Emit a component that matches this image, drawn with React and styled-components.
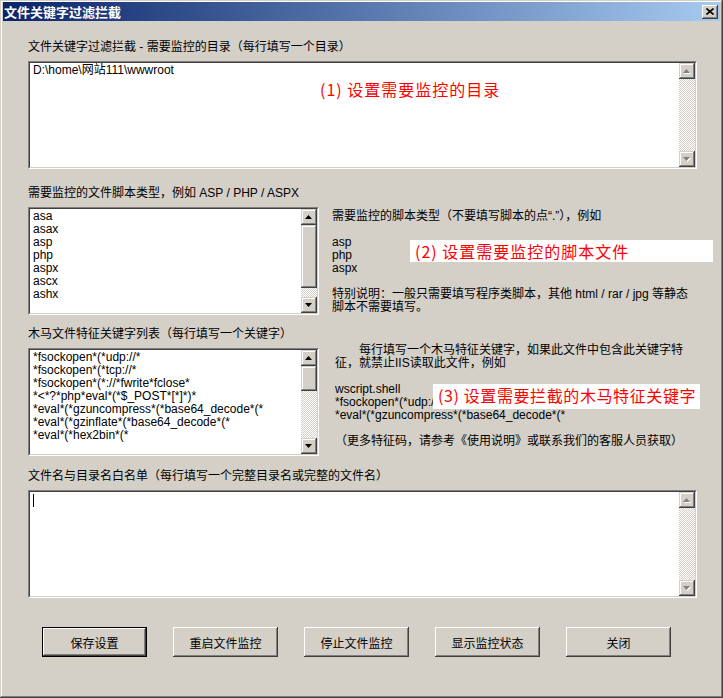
import React from 'react'
import styled, { createGlobalStyle } from 'styled-components'

const GlobalStyle = createGlobalStyle`
  html, body {
    margin: 0;
    padding: 0;
    background: #d4d0c8;
  }
  body {
    font-family: "Liberation Sans", "Noto Sans CJK SC", sans-serif;
    font-size: 12px;
    color: #000;
  }
`

const scriptTypes = ['asa', 'asax', 'asp', 'php', 'aspx', 'ascx', 'ashx']

const trojanKeys = [
  '*fsockopen*(*udp://*',
  '*fsockopen*(*tcp://*',
  '*fsockopen*(*://*fwrite*fclose*',
  '*<*?*php*eval*(*$_POST*[*]*)*',
  '*eval*(*gzuncompress*(*base64_decode*(*',
  '*eval*(*gzinflate*(*base64_decode*(*',
  '*eval*(*hex2bin*(*',
]

const scriptHelp = [
  '需要监控的脚本类型（不要填写脚本的点“.”），例如',
  '',
  'asp',
  'php',
  'aspx',
  '',
  '特别说明：一般只需要填写程序类脚本，其他 html / rar / jpg 等静态',
  '脚本不需要填写。',
]

const trojanHelp = [
  '\u3000\u3000每行填写一个木马特征关键字，如果此文件中包含此关键字特',
  '征，就禁止IIS读取此文件，例如',
  '',
  'wscript.shell',
  '*fsockopen*(*udp://*',
  '*eval*(*gzuncompress*(*base64_decode*(*',
  '',
  '（更多特征码，请参考《使用说明》或联系我们的客服人员获取）',
]

const buttons = ['保存设置', '重启文件监控', '停止文件监控', '显示监控状态', '关闭']

const Arrow = ({ dir, disabled }) => (
  <svg width="8" height="5" viewBox="0 0 8 5">
    {disabled && (
      <polygon
        points={dir === 'up' ? '4.5,1 8,5 1,5' : '1,1 8,1 4.5,5'}
        fill="#fff"
      />
    )}
    <polygon
      points={dir === 'up' ? '3.5,0 7,4 0,4' : '0,0 7,0 3.5,4'}
      fill={disabled ? '#808080' : '#000'}
    />
  </svg>
)

const ScrollBar = ({ disabled, thumbTop, thumbHeight }) => (
  <Bar>
    <ArrowButton>
      <Arrow dir="up" disabled={disabled} />
    </ArrowButton>
    <Track>
      {!disabled && <Thumb style={{ top: thumbTop, height: thumbHeight }} />}
    </Track>
    <ArrowButton>
      <Arrow dir="down" disabled={disabled} />
    </ArrowButton>
  </Bar>
)

const App = () => {
  return (
    <>
      <GlobalStyle />
      <Window>
        <TitleBar>
          <Title>文件关键字过滤拦截</Title>
          <CloseButton>
            <svg width="8" height="7" viewBox="0 0 8 7">
              <path d="M0.5 0.5 L7.5 6.5 M7.5 0.5 L0.5 6.5" stroke="#000" strokeWidth="1.6" />
            </svg>
          </CloseButton>
        </TitleBar>

        <Body>
          <Section>
            <Label>文件关键字过滤拦截 - 需要监控的目录（每行填写一个目录）</Label>
            <Sunken>
              <Well>
                <Content>
                  <Line>D:\home\网站111\wwwroot</Line>
                </Content>
                <ScrollBar disabled />
              </Well>
            </Sunken>
          </Section>

          <Section gap={17}>
            <Label>需要监控的文件脚本类型，例如 ASP / PHP / ASPX</Label>
            <Row>
              <ListBox>
                <Well>
                  <Content>
                    {scriptTypes.map((t) => (
                      <Line key={t}>{t}</Line>
                    ))}
                  </Content>
                  <ScrollBar thumbTop={0} thumbHeight={63} />
                </Well>
              </ListBox>
              <Notes offset={3} indent={0}>
                {scriptHelp.map((l, i) => (
                  <Line key={i}>{l}</Line>
                ))}
              </Notes>
            </Row>
          </Section>

          <Section gap={12}>
            <Label>木马文件特征关键字列表（每行填写一个关键字）</Label>
            <Row>
              <ListBox>
                <Well>
                  <Content>
                    {trojanKeys.map((t) => (
                      <Line key={t}>{t}</Line>
                    ))}
                  </Content>
                  <ScrollBar thumbTop={0} thumbHeight={25} />
                </Well>
              </ListBox>
              <Notes offset={-4} indent={3}>
                {trojanHelp.map((l, i) => (
                  <Line key={i}>{l}</Line>
                ))}
              </Notes>
            </Row>
          </Section>

          <Section gap={13}>
            <Label>文件名与目录名白名单（每行填写一个完整目录名或完整的文件名）</Label>
            <Sunken>
              <Well>
                <Content>
                  <Caret />
                </Content>
                <ScrollBar disabled />
              </Well>
            </Sunken>
          </Section>

          <ButtonRow>
            {buttons.map((b, i) => (
              <Button key={b} $default={i === 0}>
                {b}
              </Button>
            ))}
          </ButtonRow>

          <Callout style={{ left: 312, top: 58 }} $spacing={1}>
            (1) 设置需要监控的目录
          </Callout>
          <Callout style={{ left: 407, top: 219, width: 303, height: 22 }} $boxed $spacing={1}>
            (2) 设置需要监控的脚本文件
          </Callout>
          <Callout style={{ left: 430, top: 363, width: 267, height: 25 }} $boxed $spacing={0.6}>
            (3) 设置需要拦截的木马特征关键字
          </Callout>
        </Body>
      </Window>
    </>
  )
}

export default App

const Window = styled.div`
  width: 723px;
  height: 698px;
  box-sizing: border-box;
  padding: 2px 3px 3px 3px;
  background: #d4d0c8;
  box-shadow: inset -1px -1px #404040, inset 1px 1px #d4d0c8,
    inset -2px -2px #808080, inset 2px 2px #fff;
  display: flex;
  flex-direction: column;
`

const TitleBar = styled.div`
  height: 19px;
  display: flex;
  align-items: center;
  justify-content: space-between;
  padding: 0 2px 0 1px;
  background: linear-gradient(to right, #0a246a, #a6caf0);
`

const Title = styled.div`
  color: #fff;
  font-family: "Noto Sans CJK SC", sans-serif;
  font-weight: 700;
  font-size: 13px;
  line-height: 19px;
`

const CloseButton = styled.div`
  width: 16px;
  height: 14px;
  box-sizing: border-box;
  display: flex;
  align-items: center;
  justify-content: center;
  background: #d4d0c8;
  box-shadow: inset -1px -1px #404040, inset 1px 1px #fff,
    inset -2px -2px #808080;
`

const Body = styled.div`
  position: relative;
  flex: 1;
  padding: 19px 23px 0 25px;
`

const Section = styled.div`
  margin-top: ${(p) => p.gap || 0}px;
`

const Label = styled.div`
  height: 14px;
  line-height: 14px;
  margin-bottom: 7px;
  white-space: nowrap;
`

const Row = styled.div`
  display: flex;
  align-items: flex-start;
`

const Sunken = styled.div`
  height: 108px;
  box-sizing: border-box;
  border: 1px solid;
  border-color: #808080 #fff #fff #808080;
`

const ListBox = styled(Sunken)`
  width: 291px;
  flex: none;
`

const Well = styled.div`
  height: 100%;
  box-sizing: border-box;
  border: 1px solid;
  border-color: #404040 #d4d0c8 #d4d0c8 #404040;
  background: #fff;
  display: flex;
`

const Content = styled.div`
  flex: 1;
  padding: 1px 3px;
  overflow: hidden;
`

const Line = styled.div`
  height: 13px;
  line-height: 13px;
  white-space: pre;
`

const Caret = styled.div`
  width: 1px;
  height: 13px;
  margin-top: 1px;
  background: #000;
`

const Bar = styled.div`
  width: 16px;
  flex: none;
  display: flex;
  flex-direction: column;
`

const raised = `
  background: #d4d0c8;
  box-shadow: inset -1px -1px #404040, inset 1px 1px #d4d0c8,
    inset -2px -2px #808080, inset 2px 2px #fff;
`

const ArrowButton = styled.div`
  height: 16px;
  flex: none;
  display: flex;
  align-items: center;
  justify-content: center;
  ${raised}
`

const Track = styled.div`
  position: relative;
  flex: 1;
  background-color: #d4d0c8;
  background-image: repeating-conic-gradient(#fff 0 25%, #d4d0c8 0 50%);
  background-size: 2px 2px;
`

const Thumb = styled.div`
  position: absolute;
  left: 0;
  right: 0;
  ${raised}
`

const Notes = styled.div`
  margin-left: ${(p) => 13 + p.indent}px;
  margin-top: ${(p) => p.offset}px;
  flex: 1;
`

const ButtonRow = styled.div`
  display: flex;
  gap: 26px;
  margin-top: 29px;
  padding-left: 14px;
`

const Button = styled.div`
  width: 105px;
  height: 30px;
  box-sizing: border-box;
  display: flex;
  align-items: center;
  justify-content: center;
  font-family: "Noto Sans CJK SC", sans-serif;
  font-size: 12px;
  background: #d4d0c8;
  border: ${(p) => (p.$default ? '1px solid #000' : 'none')};
  box-shadow: inset -1px -1px #404040, inset 1px 1px #fff,
    inset -2px -2px #808080, inset 2px 2px #d4d0c8;
`

const Callout = styled.div`
  position: absolute;
  box-sizing: border-box;
  padding-left: 5px;
  color: #ff0000;
  font-family: "Noto Sans CJK SC", sans-serif;
  font-size: 16px;
  letter-spacing: ${(p) => p.$spacing}px;
  line-height: ${(p) => (p.$boxed ? '22px' : '20px')};
  white-space: nowrap;
  background: ${(p) => (p.$boxed ? '#fff' : 'transparent')};
`
